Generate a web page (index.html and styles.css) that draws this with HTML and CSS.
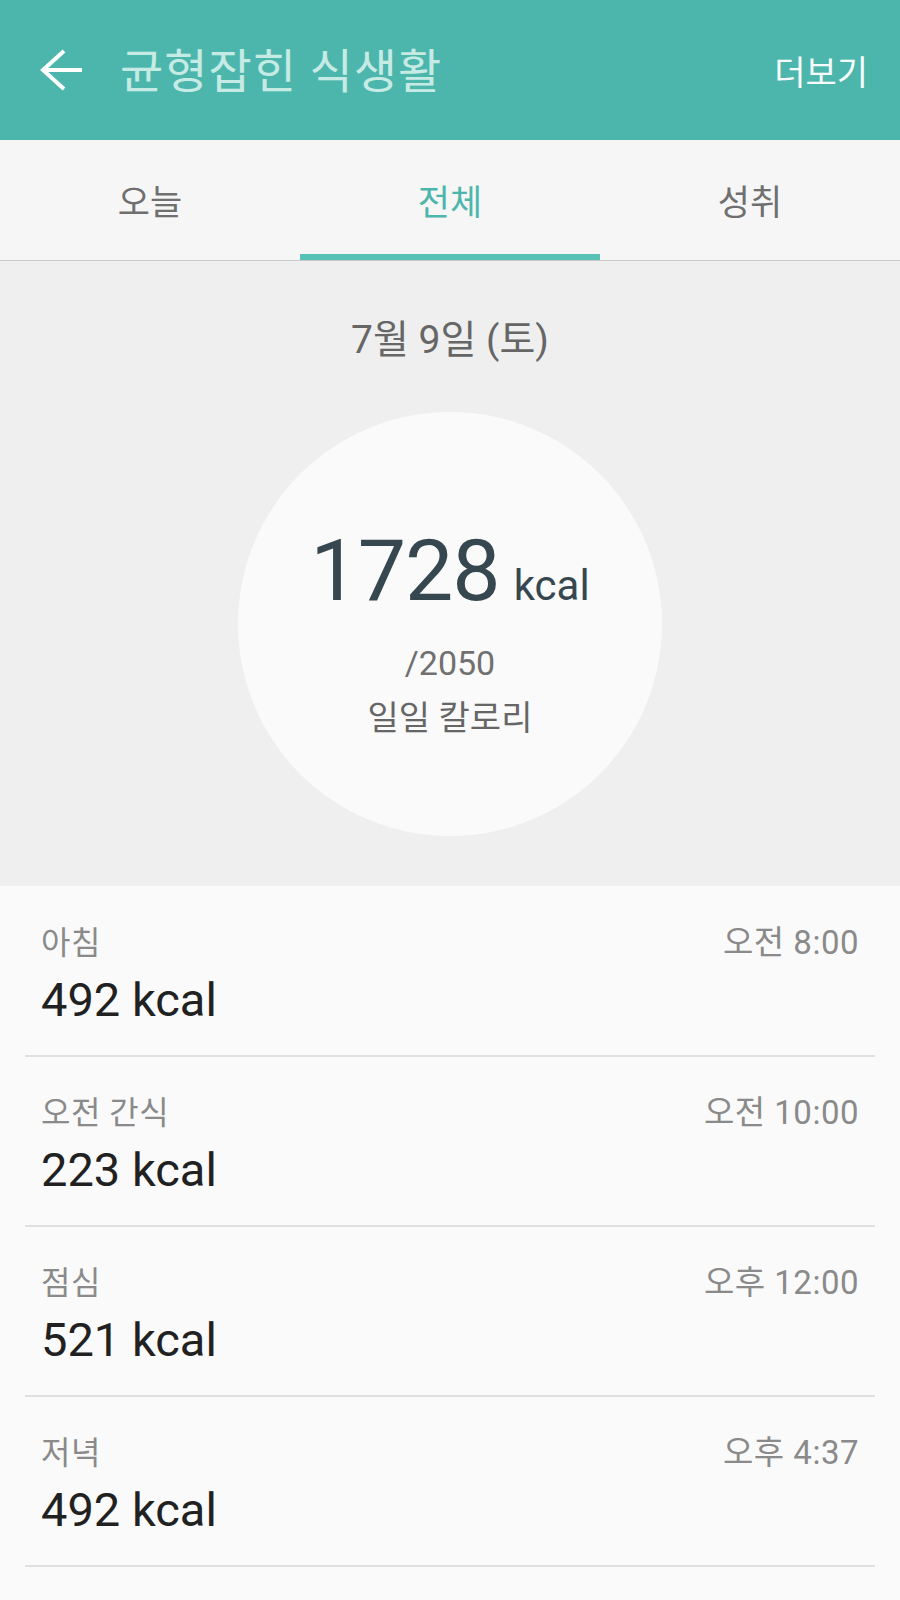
FILE: index.html
```html
<!DOCTYPE html>
<html lang="ko">
<head>
<meta charset="utf-8">
<title>균형잡힌 식생활</title>
<link rel="stylesheet" href="styles.css">
</head>
<body>
<header class="appbar">
  <svg class="back" width="44" height="44" viewBox="0 0 44 44" aria-hidden="true">
    <path d="M3 22 H42 M24 3 L3 22 L24 41" fill="none" stroke="#ffffff" stroke-width="4" stroke-linejoin="miter"/>
  </svg>
  <h1 class="title">균형잡힌 식생활</h1>
  <span class="more">더보기</span>
</header>

<nav class="tabs">
  <div class="tab">오늘</div>
  <div class="tab active">전체</div>
  <div class="tab">성취</div>
</nav>

<section class="summary">
  <div class="date">7월 9일 (토)</div>
  <div class="circle">
    <div class="total"><span class="num">1728</span><span class="unit">kcal</span></div>
    <div class="goal">/2050</div>
    <div class="label">일일 칼로리</div>
  </div>
</section>

<section class="list">
  <div class="row">
    <div class="row-top"><span class="meal">아침</span><span class="time">오전 8:00</span></div>
    <div class="kcal">492 kcal</div>
  </div>
  <div class="row">
    <div class="row-top"><span class="meal">오전 간식</span><span class="time">오전 10:00</span></div>
    <div class="kcal">223 kcal</div>
  </div>
  <div class="row">
    <div class="row-top"><span class="meal">점심</span><span class="time">오후 12:00</span></div>
    <div class="kcal">521 kcal</div>
  </div>
  <div class="row">
    <div class="row-top"><span class="meal">저녁</span><span class="time">오후 4:37</span></div>
    <div class="kcal">492 kcal</div>
  </div>
</section>
</body>
</html>
```

FILE: styles.css
```css
* { box-sizing: border-box; }

html, body {
  margin: 0;
  padding: 0;
  background: #fafafa;
  font-family: Roboto, "Noto Sans CJK KR", sans-serif;
}

.appbar {
  height: 140px;
  background: #4db6ac;
  display: flex;
  align-items: center;
  padding: 0 32px 0 40px;
}

.back {
  flex: none;
  display: block;
}

.title {
  margin: 2px 0 0 36px;
  flex: 1;
  font-size: 47px;
  font-weight: 400;
  letter-spacing: 1px;
  color: #c6ebe5;
  line-height: 1;
}

.more {
  font-size: 34px;
  color: #f6fcfb;
}

.tabs {
  display: flex;
  height: 121px;
  background: #f6f6f6;
  border-bottom: 1px solid #c9c9c9;
}

.tab {
  flex: 1;
  display: flex;
  align-items: center;
  justify-content: center;
  padding-top: 4px;
  font-size: 35px;
  color: #6f6f6f;
  border-bottom: 6px solid transparent;
}

.tab.active {
  color: #4db6ac;
  border-bottom-color: #56c1b5;
}

.summary {
  background: #efefef;
  height: 625px;
  padding-top: 57px;
  display: flex;
  flex-direction: column;
  align-items: center;
}

.date {
  font-size: 39px;
  line-height: 44px;
  color: #666666;
}

.circle {
  margin-top: 50px;
  width: 424px;
  height: 424px;
  border-radius: 50%;
  background: #fafafa;
  display: flex;
  flex-direction: column;
  align-items: center;
  padding-top: 109px;
}

.total {
  font-size: 86px;
  line-height: 100px;
  color: #37474f;
  white-space: nowrap;
}

.num {
  letter-spacing: -1px;
}

.unit {
  font-size: 42px;
  line-height: 1;
  margin-left: 14px;
}

.goal {
  margin-top: 22px;
  font-size: 34px;
  line-height: 40px;
  color: #707070;
}

.label {
  margin-top: 13px;
  font-size: 34px;
  line-height: 44px;
  color: #666666;
}

.list {
  padding: 1px 25px 0;
  background: #fafafa;
}

.row {
  padding: 36px 16px 27px;
  border-bottom: 2px solid #e0e0e0;
}

.row-top {
  display: flex;
  justify-content: space-between;
  align-items: baseline;
  line-height: 40px;
  color: #8a8a8a;
}

.meal {
  font-size: 32px;
  letter-spacing: 0.5px;
}

.time {
  font-size: 33px;
  letter-spacing: 0.5px;
}

.kcal {
  margin-top: 9px;
  font-size: 47px;
  line-height: 56px;
  color: #212121;
}
```
